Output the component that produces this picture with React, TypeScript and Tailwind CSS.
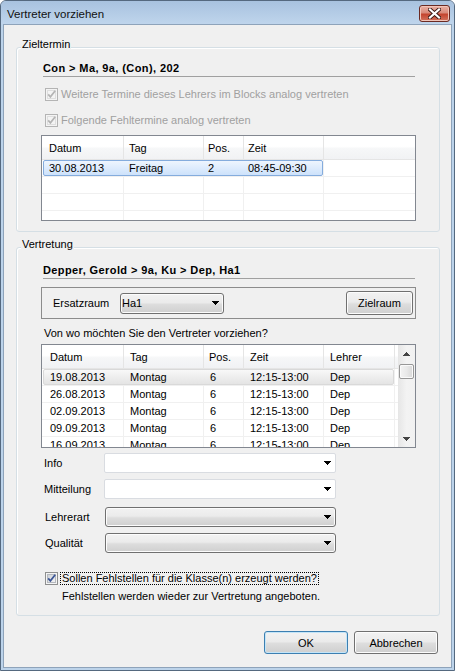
import React from 'react'

const btnBg =
  'bg-[linear-gradient(#f2f2f2,#ebebeb_45%,#dddddd_55%,#cfcfcf)] shadow-[inset_0_0_0_1px_#fcfcfc]'

function DropArrow({ up = false, color = '#000' }: { up?: boolean; color?: string }) {
  return (
    <svg width="7" height="4" viewBox="0 0 7 4" shapeRendering="crispEdges"
      className={up ? 'shrink-0 rotate-180' : 'shrink-0'}>
      <path d="M0 0h7v1h-1v1h-1v1h-1v1h-1v-1h-1v-1h-1v-1h-1z" fill={color} />
    </svg>
  )
}

function Check({ disabled = false }: { disabled?: boolean }) {
  const edge = disabled ? '#b4b4b4' : '#8e8f8f'
  const mark = disabled ? '#b4b4b4' : '#3b5596'
  return (
    <svg width="13" height="13" viewBox="0 0 13 13" className="shrink-0">
      <defs>
        <linearGradient id="cbin" x1="0" y1="0" x2="1" y2="1">
          <stop offset="0" stopColor="#cbcfd5" />
          <stop offset="1" stopColor="#f6f6f6" />
        </linearGradient>
      </defs>
      <rect x="0.5" y="0.5" width="12" height="12" fill={disabled ? '#f4f4f4' : '#f4f4f4'} stroke={edge} />
      <rect x="2.5" y="2.5" width="8" height="8" fill={disabled ? '#f4f4f4' : 'url(#cbin)'}
        stroke={disabled ? '#dedede' : '#b4b8be'} />
      <path d="M3.2 6.4 L5.4 8.9 L10.2 2.8" fill="none" stroke={mark} strokeWidth="1.7" />
    </svg>
  )
}

function Button({ label, w, h, isDefault = false }: { label: string; w: string; h: string; isDefault?: boolean }) {
  return (
    <button className={`${w} ${h} ${isDefault
      ? 'border border-[#3c7fb1] rounded-[3px] bg-[linear-gradient(#f2f2f2,#ebebeb_45%,#dddddd_55%,#cfcfcf)] shadow-[inset_0_0_0_1px_#c4e5f8]'
      : 'border border-[#707070] rounded-[3px] ' + btnBg} flex items-center justify-center text-[11px] leading-[14px]`}>
      {label}
    </button>
  )
}

function GroupBox({ title, className, children }: { title: string; className: string; children: React.ReactNode }) {
  return (
    <div className={`mx-[11px] ml-[12px] border border-[#d5dfe5] rounded-[3px] shadow-[inset_1px_1px_0_#fff] ${className}`}>
      <div className="-mt-[11px] ml-[4px] w-fit px-[1px] bg-[#f0f0f0] leading-[14px]">{title}</div>
      {children}
    </div>
  )
}

const headBg = 'bg-[linear-gradient(#ffffff,#ffffff_45%,#f6f7f8_55%,#f1f2f4)]'

const rows2 = [
  ['19.08.2013', 'Montag', '6', '12:15-13:00', 'Dep'],
  ['26.08.2013', 'Montag', '6', '12:15-13:00', 'Dep'],
  ['02.09.2013', 'Montag', '6', '12:15-13:00', 'Dep'],
  ['09.09.2013', 'Montag', '6', '12:15-13:00', 'Dep'],
  ['16.09.2013', 'Montag', '6', '12:15-13:00', 'Dep'],
]

export default function App() {
  return (
    <div className="w-[455px] h-[671px] flex flex-col bg-[#bcd3ea] border border-[#55697f] rounded-t-[6px] overflow-hidden font-['Liberation_Sans',Arial,sans-serif] text-[11px] text-black">
      {/* Titelleiste */}
      <div className="h-[23px] shrink-0 flex items-start justify-between pl-[6px] pr-[4px] bg-gradient-to-b from-[#a8c2df] to-[#bfd5ec]">
        <span className="mt-[6px] text-[11.5px] leading-[14px] text-[#111]">Vertreter vorziehen</span>
        <button className="mt-[4px] w-[31px] h-[17px] flex items-center justify-center rounded-[3px] border border-[#6b2a22] bg-[linear-gradient(#ebb1a4,#d98a7a_45%,#c4452f_55%,#d3735e)] shadow-[inset_0_0_0_1px_#f1c4b8]">
          <svg width="13" height="11" viewBox="0 0 13 11">
            <path d="M2 1.5 L11 9.5 M11 1.5 L2 9.5" stroke="#3c1a15" strokeWidth="4" strokeLinecap="square" />
            <path d="M2 1.5 L11 9.5 M11 1.5 L2 9.5" stroke="#fff" strokeWidth="2.2" strokeLinecap="square" />
          </svg>
        </button>
      </div>

      {/* Client-Bereich */}
      <div className="flex-1 mx-[2px] mb-[2px] border border-[#8ea3ba] bg-[#f0f0f0] flex flex-col">
        {/* Zieltermin */}
        <GroupBox title="Zieltermin" className="mt-[22px] pb-[10px]">
          <div className="pl-[24px] pr-[23px] flex flex-col">
            <div className="mt-[10px] ml-[2px] mr-[1px] leading-[15px] font-bold tracking-[0.4px] border-b border-[#a0a0a0]">
              Con &gt; Ma, 9a, (Con), 202
            </div>
            <div className="mt-[11px] ml-[4px] h-[13px] flex items-center gap-[3px] text-[#a0a0a0]">
              <Check disabled />
              <span className="leading-[13px]">Weitere Termine dieses Lehrers im Blocks analog vertreten</span>
            </div>
            <div className="mt-[13px] ml-[4px] h-[13px] flex items-center gap-[3px] text-[#a0a0a0]">
              <Check disabled />
              <span className="leading-[13px]">Folgende Fehltermine analog vertreten</span>
            </div>

            <div className="mt-[8px] h-[86px] border border-[#828790] bg-white flex flex-col overflow-hidden">
              <div className={`h-[24px] shrink-0 flex border-b border-[#e5e5e5] ${headBg}`}>
                <div className="w-[82px] pl-[7px] pt-[2px] flex items-center border-r border-[#e5e5e5]">Datum</div>
                <div className="w-[80px] pl-[5px] pt-[2px] flex items-center border-r border-[#e5e5e5]">Tag</div>
                <div className="w-[40px] pl-[4px] pt-[2px] flex items-center border-r border-[#e5e5e5]">Pos.</div>
                <div className="w-[80px] pl-[4px] pt-[2px] flex items-center border-r border-[#e5e5e5]">Zeit</div>
                <div className="flex-1" />
              </div>
              <div className="h-[17px] shrink-0 flex border-b border-[#f0f0f0]">
                <div className="w-[1px]" />
                <div className="w-[280px] flex border border-[#84acdd] rounded-[2px] bg-gradient-to-b from-[#eef5fe] to-[#cde2fb]">
                  <div className="w-[79px] pl-[5px] flex items-center">30.08.2013</div>
                  <div className="w-[80px] pl-[6px] flex items-center">Freitag</div>
                  <div className="w-[40px] pl-[5px] flex items-center">2</div>
                  <div className="w-[79px] pl-[5px] flex items-center">08:45-09:30</div>
                </div>
                <div className="w-[1px] bg-[#f0f0f0]" />
                <div className="flex-1" />
              </div>
              {[0, 1, 2].map(i => (
                <div key={i} className="h-[17px] shrink-0 flex border-b border-[#f0f0f0]">
                  <div className="w-[82px] border-r border-[#f0f0f0]" />
                  <div className="w-[80px] border-r border-[#f0f0f0]" />
                  <div className="w-[40px] border-r border-[#f0f0f0]" />
                  <div className="w-[80px] border-r border-[#f0f0f0]" />
                  <div className="flex-1" />
                </div>
              ))}
            </div>
          </div>
        </GroupBox>

        {/* Vertretung */}
        <GroupBox title="Vertretung" className="mt-[15px] pb-[12px]">
          <div className="pl-[24px] pr-[23px] flex flex-col">
            <div className="mt-[12px] ml-[2px] mr-[1px] leading-[15px] font-bold tracking-[0.4px] border-b border-[#a0a0a0]">
              Depper, Gerold &gt; 9a, Ku &gt; Dep, Ha1
            </div>

            <div className="mt-[8px] h-[32px] border border-[#8c8c8c] flex items-center pl-[11px] pr-[2px]">
              <span className="w-[67px]">Ersatzraum</span>
              <div className={`w-[104px] h-[21px] border border-[#707070] rounded-[3px] ${btnBg} flex items-center pl-[1px] pr-[4px]`}>
                <span className="flex-1">Ha1</span>
                <DropArrow />
              </div>
              <div className="ml-auto">
                <Button label="Zielraum" w="w-[67px]" h="h-[24px]" />
              </div>
            </div>

            <div className="mt-[7px] ml-[3px] leading-[14px]">Von wo möchten Sie den Vertreter vorziehen?</div>

            <div className="mt-[4px] h-[104px] border border-[#828790] bg-white flex overflow-hidden">
              <div className="flex-1 flex flex-col overflow-hidden">
                <div className={`h-[24px] shrink-0 flex border-b border-[#e5e5e5] ${headBg}`}>
                  <div className="w-[82px] pl-[8px] pt-[2px] flex items-center border-r border-[#e5e5e5]">Datum</div>
                  <div className="w-[80px] pl-[6px] pt-[2px] flex items-center border-r border-[#e5e5e5]">Tag</div>
                  <div className="w-[40px] pl-[5px] pt-[2px] flex items-center border-r border-[#e5e5e5]">Pos.</div>
                  <div className="w-[80px] pl-[6px] pt-[2px] flex items-center border-r border-[#e5e5e5]">Zeit</div>
                  <div className="w-[71px] pl-[6px] pt-[2px] flex items-center border-r border-[#e5e5e5]">Lehrer</div>
                  <div className="flex-1" />
                </div>
                {rows2.map((r, i) =>
                  i === 0 ? (
                    <div key={i} className="h-[17px] shrink-0 flex border-b border-[#f0f0f0]">
                      <div className="w-[1px]" />
                      <div className="w-[351px] flex border border-[#d9d9d9] rounded-[2px] bg-gradient-to-b from-[#f8f8f8] to-[#e4e4e4]">
                        <div className="w-[79px] pl-[6px] flex items-center">{r[0]}</div>
                        <div className="w-[80px] pl-[7px] flex items-center">{r[1]}</div>
                        <div className="w-[40px] pl-[7px] flex items-center">{r[2]}</div>
                        <div className="w-[80px] pl-[7px] flex items-center">{r[3]}</div>
                        <div className="w-[70px] pl-[7px] flex items-center">{r[4]}</div>
                      </div>
                      <div className="w-[1px] bg-[#f0f0f0]" />
                      <div className="flex-1" />
                    </div>
                  ) : (
                    <div key={i} className="h-[17px] shrink-0 flex border-b border-[#f0f0f0]">
                      <div className="w-[82px] pl-[8px] flex items-center border-r border-[#f0f0f0]">{r[0]}</div>
                      <div className="w-[80px] pl-[6px] flex items-center border-r border-[#f0f0f0]">{r[1]}</div>
                      <div className="w-[40px] pl-[6px] flex items-center border-r border-[#f0f0f0]">{r[2]}</div>
                      <div className="w-[80px] pl-[6px] flex items-center border-r border-[#f0f0f0]">{r[3]}</div>
                      <div className="w-[71px] pl-[6px] flex items-center border-r border-[#f0f0f0]">{r[4]}</div>
                      <div className="flex-1" />
                    </div>
                  )
                )}
              </div>
              {/* Scrollbar */}
              <div className="w-[17px] shrink-0 flex flex-col bg-gradient-to-r from-[#e6e6e6] via-[#f3f3f3] to-[#f1f1f1]">
                <div className="h-[17px] shrink-0 flex items-center justify-center">
                  <DropArrow up color="#444" />
                </div>
                <div className="mt-[2px] mx-[1px] h-[15px] rounded-[2px] border border-[#979797] bg-gradient-to-r from-[#f3f3f3] via-[#e9e9e9] to-[#d8d8d8] shadow-[inset_0_0_0_1px_#fafafa]" />
                <div className="flex-1" />
                <div className="h-[17px] shrink-0 flex items-center justify-center">
                  <DropArrow color="#444" />
                </div>
              </div>
            </div>

            <div className="mt-[5px] flex items-center">
              <span className="ml-[3px] w-[60px]">Info</span>
              <div className="w-[232px] h-[20px] bg-white border border-[#d9dce1] rounded-[2px] flex items-center justify-end pr-[4px]">
                <DropArrow />
              </div>
            </div>
            <div className="mt-[6px] flex items-center">
              <span className="ml-[3px] w-[60px]">Mitteilung</span>
              <div className="w-[232px] h-[20px] bg-white border border-[#d9dce1] rounded-[2px] flex items-center justify-end pr-[4px]">
                <DropArrow />
              </div>
            </div>
            <div className="mt-[8px] flex items-center">
              <span className="ml-[4px] w-[60px]">Lehrerart</span>
              <div className={`w-[231px] h-[20px] border border-[#707070] rounded-[3px] ${btnBg} flex items-center justify-end pr-[4px]`}>
                <DropArrow />
              </div>
            </div>
            <div className="mt-[6px] flex items-center">
              <span className="ml-[4px] w-[60px]">Qualität</span>
              <div className={`w-[231px] h-[20px] border border-[#707070] rounded-[3px] ${btnBg} flex items-center justify-end pr-[4px]`}>
                <DropArrow />
              </div>
            </div>

            <div className="mt-[19px] ml-[4px] h-[13px] flex items-center gap-[2px]">
              <Check />
              <span className="border border-dotted border-black px-[1px] leading-[11px]">
                Sollen Fehlstellen für die Klasse(n) erzeugt werden?
              </span>
            </div>
            <div className="mt-[4px] ml-[21px] leading-[14px]">Fehlstellen werden wieder zur Vertretung angeboten.</div>
          </div>
        </GroupBox>

        <div className="mt-[15px] flex justify-end gap-[6px] pr-[13px]">
          <Button label="OK" w="w-[84px]" h="h-[23px]" isDefault />
          <Button label="Abbrechen" w="w-[84px]" h="h-[23px]" />
        </div>
      </div>
    </div>
  )
}
